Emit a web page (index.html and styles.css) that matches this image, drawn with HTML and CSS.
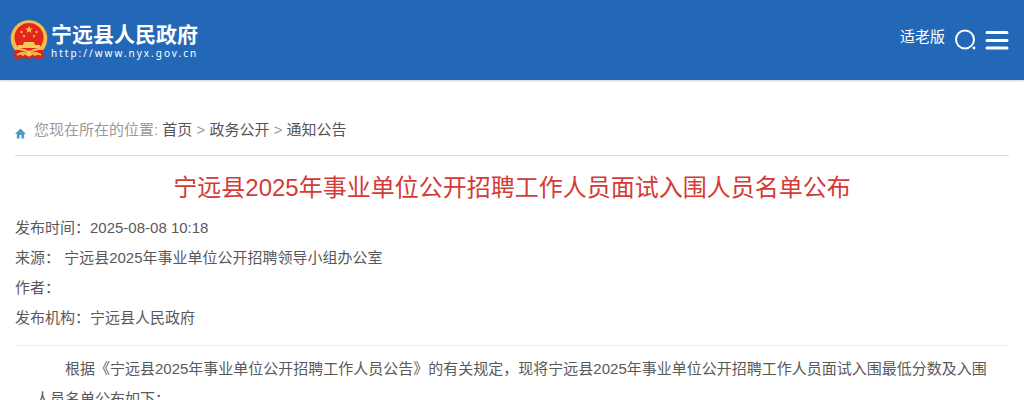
FILE: index.html
```html
<!DOCTYPE html>
<html lang="zh-CN">
  <head>
    <meta charset="UTF-8" />
    <meta name="viewport" content="width=device-width, initial-scale=1.0" />
    <title>宁远县2025年事业单位公开招聘工作人员面试入围人员名单公布</title>
    <link rel="stylesheet" href="styles.css">
  </head>
  <body>
    <header class="header">
      <a class="logo" href="#">
        <svg class="emblem" viewBox="0 0 38 40" aria-hidden="true">
          <path d="M5 28 L4 37 Q9 40 14 37 L19 39 L24 37 Q29 40 34 37 L33 28 Z" fill="#d8261c" />
          <circle cx="19" cy="18.5" r="18.3" fill="#f3bd4e" />
          <circle cx="19" cy="17.5" r="14.5" fill="#e5261d" />
          <path d="M19 5.5 L20 8.4 H23 L20.6 10.2 L21.5 13 L19 11.3 L16.5 13 L17.4 10.2 L15 8.4 H18 Z" fill="#f6ca55" />
          <g fill="#f3ae43">
            <circle cx="11.5" cy="12" r="1.2" />
            <circle cx="26.5" cy="12" r="1.2" />
            <circle cx="14" cy="16" r="1.2" />
            <circle cx="24" cy="16" r="1.2" />
          </g>
          <path d="M14 22 H24 L25 25 H30 V28 H8 V25 H13 Z" fill="#f8c95b" />
          <path d="M5 30 Q12 29 19 33 Q26 29 33 30 L32 34 Q24 32 19 37 Q14 32 6 34 Z" fill="#d8261c" />
          <path d="M8 29 Q14 29 19 33 Q24 29 30 29" fill="none" stroke="#f3bd4e" stroke-width="2" />
          <path d="M7 35 Q14 30 19 36 Q24 30 31 35" fill="none" stroke="#f3bd4e" stroke-width="2" />
          <circle cx="19" cy="33" r="2.4" fill="#f8c95b" />
          <path d="M4 36 Q9 40 15 36 L19 38 L23 36 Q29 40 34 36" fill="none" stroke="#d8261c" stroke-width="2" />
        </svg>
        <span class="logo-text">
          <span class="logo-name">宁远县人民政府</span>
          <span class="logo-url">http://www.nyx.gov.cn</span>
        </span>
      </a>
      <div class="tools">
        <a class="elder" href="#">适老版</a>
        <button class="icon-btn" type="button" aria-label="搜索">
          <svg width="22" height="22" viewBox="0 0 22 22">
            <circle cx="11" cy="10.5" r="9" fill="none" stroke="#fff" stroke-width="2" />
            <circle cx="20" cy="19" r="1.4" fill="#fff" />
          </svg>
        </button>
        <button class="icon-btn" type="button" aria-label="菜单">
          <svg width="24" height="20" viewBox="0 0 24 20">
            <path d="M2 2.5 H22 M2 10.5 H22 M2 18 H22" stroke="#fff" stroke-width="3" stroke-linecap="round" />
          </svg>
        </button>
      </div>
    </header>

    <main class="main">
      <nav class="location">
        <svg class="home" width="11" height="11" viewBox="0 0 12 11" aria-hidden="true">
          <path d="M6 0 L12 6 H10 V11 H7 V7 H5 V11 H2 V6 H0 Z" fill="#4f9acb" />
        </svg>
        <span>您现在所在的位置: <a href="#">首页</a> &gt; <a href="#">政务公开</a> &gt; <a href="#">通知公告</a></span>
      </nav>

      <h1 class="title">宁远县2025年事业单位公开招聘工作人员面试入围人员名单公布</h1>

      <ul class="info">
        <li>发布时间：2025-08-08 10:18</li>
        <li>来源： 宁远县2025年事业单位公开招聘领导小组办公室</li>
        <li>作者：</li>
        <li>发布机构：宁远县人民政府</li>
      </ul>

      <article class="content">
        <p>根据《宁远县2025年事业单位公开招聘工作人员公告》的有关规定，现将宁远县2025年事业单位公开招聘工作人员面试入围最低分数及入围人员名单公布如下：</p>
      </article>
    </main>
  </body>
</html>
```
FILE: styles.css
```css
* {
  margin: 0;
  padding: 0;
  box-sizing: border-box;
}
body {
  font-family: "Liberation Sans", "Noto Sans CJK SC", sans-serif;
  font-size: 15px;
  line-height: 30px;
  color: #595959;
  background-color: #fff;
}
a {
  color: inherit;
  text-decoration: none;
}
ul {
  list-style: none;
}

/* header */
.header {
  display: flex;
  justify-content: space-between;
  align-items: center;
  height: 80px;
  padding: 0 15px 0 10px;
  color: #fff;
  background-color: #2368b7;
  box-shadow: 0 1px 2px rgba(0, 0, 0, 0.2);
}
.logo {
  display: flex;
  align-items: center;
  gap: 3px;
}
.emblem {
  width: 38px;
  height: 40px;
}
.logo-text {
  display: flex;
  flex-direction: column;
  padding-top: 2px;
}
.logo-name {
  font-size: 21px;
  font-weight: bold;
  line-height: 24px;
}
.logo-url {
  font-family: "Noto Sans", sans-serif;
  font-size: 10px;
  line-height: 12px;
  letter-spacing: 2px;
}
.tools {
  display: flex;
  align-items: center;
  gap: 9px;
}
.elder {
  padding-bottom: 6px;
}
.icon-btn {
  display: flex;
  border: none;
  background: none;
  cursor: pointer;
}

/* article */
.main {
  padding: 35px 15px 0;
}
.location {
  display: flex;
  align-items: center;
  gap: 8px;
  padding-bottom: 10px;
  border-bottom: 1px solid #ddd;
  color: #999;
}
.location a {
  color: #555;
}
.home {
  margin-top: 6px;
}
.title {
  padding: 12px 0 5px;
  font-size: 24px;
  font-weight: normal;
  line-height: 40px;
  text-align: center;
  color: #d43a36;
}
.info {
  padding-bottom: 12px;
  border-bottom: 1px solid #eee;
}
.content {
  padding: 8px 20px;
}
.content p {
  text-indent: 2em;
}
```
